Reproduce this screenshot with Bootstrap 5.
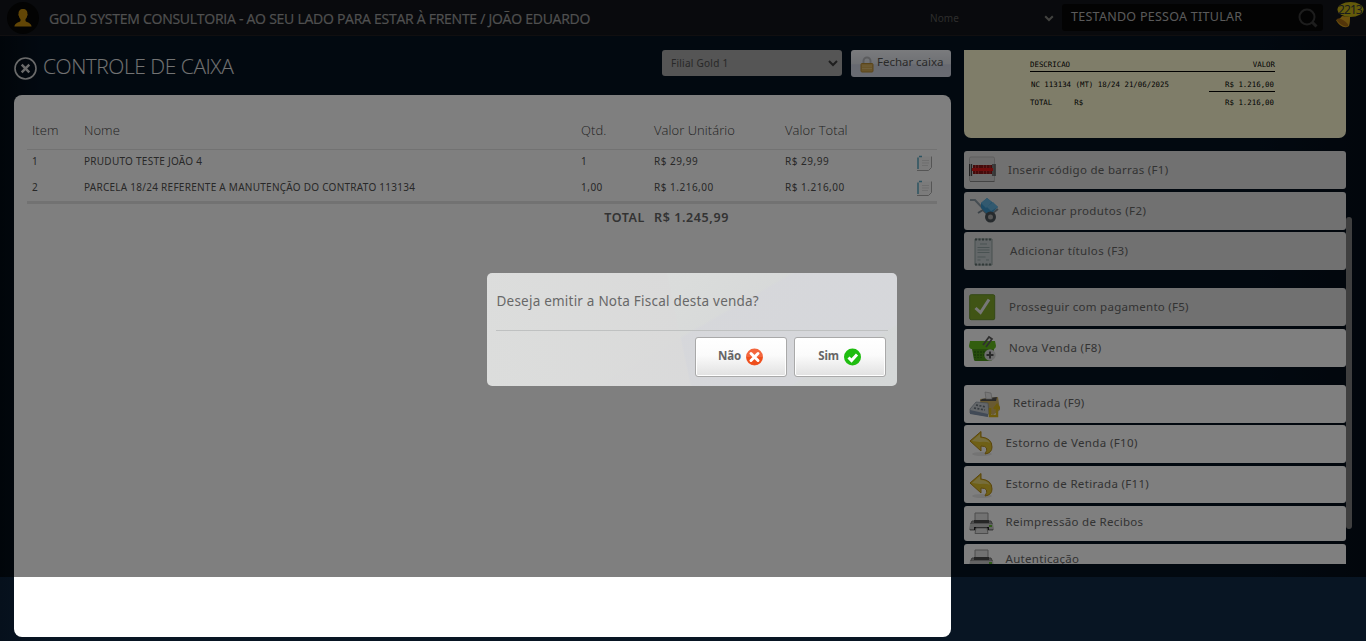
<!DOCTYPE html>
<html lang="pt-BR">
<head>
<meta charset="utf-8">
<title>Controle de Caixa</title>
<meta name="viewport" content="width=device-width, initial-scale=1">
<link rel="stylesheet" href="https://cdn.jsdelivr.net/npm/bootstrap@5.3.0/dist/css/bootstrap.min.css">
<style>
body{height:641px;overflow:hidden;background:linear-gradient(90deg,#030b14 0,#051221 3%,#051221 92%,#040d18 100%);font-family:"Noto Sans","Open Sans",sans-serif;color:#666;font-size:11px;letter-spacing:.3px}
.foot-bg{position:absolute;left:0;right:0;top:577px;height:64px;background:linear-gradient(90deg,#06101c,#081523 4%,#081523)}
.topbar{height:36px;background:#12151a;border-bottom:1px solid #221f20;position:relative}
.avatar{width:32px;height:32px;border-radius:50%;background:#060606;margin-left:7px;margin-top:1px}
.brand-title{font:14px/20px "Open Sans",sans-serif;color:#a0a0a0;margin-left:10px;letter-spacing:-.26px;padding-top:2px;white-space:nowrap;-webkit-text-stroke:.2px #a0a0a0}
.kind{width:124px;margin-left:auto;color:#5b5a58;font-size:10px;letter-spacing:.1px;padding-top:2px}
.search{width:261px;height:27px;background:#070707;border-radius:3px;margin:0 14px 0 8px;padding:0 5px 0 9px;color:#b5b5b5;font-size:12.5px;letter-spacing:.27px}
.work{padding:14px 14px 0;position:relative}
.left-col{width:937px}
.page-title{font:300 21px/30px "Open Sans",sans-serif;color:#e6e6e6;letter-spacing:-.47px;margin:1px 0 0 6px;height:29px}
.branch{width:180px;height:26px;background:#aaa;border-radius:3px;padding:0 4px 0 9px;font-size:10px;color:#505050;letter-spacing:.25px}
.close-till{width:100px;height:27px;border-radius:3px;margin-left:9px;background:linear-gradient(#f4f6fb,#dfe2e9 50%,#ced3e2 55%,#d3d8e5);border:0;padding:0 0 3px 9px;color:#555;font-size:11.5px;letter-spacing:-.03px;white-space:nowrap}
.sheet{height:542px;background:#fff;border-radius:8px;margin-top:15px;padding:18px 14px 0 13px}
.items{table-layout:fixed;width:910px;border-collapse:collapse}
.items th{font:300 13px/20px "Open Sans",sans-serif;height:36px;padding:7px 0 9px 5px;letter-spacing:.05px;color:#444;border-bottom:1px solid #e5e5e5;vertical-align:middle}
.items td{height:26px;padding:0 0 2px 5px;font-size:10px;line-height:15px;color:#505050;letter-spacing:.26px;white-space:nowrap;vertical-align:middle}
.items .second td{height:27px;padding-bottom:1px}
.items td:nth-child(n+3){letter-spacing:.5px}
.items tr td:last-child{padding:1px 0 0 4px}
.items td svg{display:block;margin-top:1px}
.items .second svg{margin-top:-1px}
.items .total td,.items .total td:last-child{border-top:3px solid #e5e5e5;font-weight:600;font-size:12.5px;height:29px;padding:0 0 1px 5px;color:#666;letter-spacing:.6px}
.right-col{width:382px;margin-left:13px;height:514px;overflow:hidden}
.receipt{height:88px;background:#fefbd3;border-radius:0 0 7px 7px;font:7.4px/10px "DejaVu Sans Mono",monospace;letter-spacing:0;color:#000;padding:9px 71px 0 66px;margin-bottom:13.3px}
.receipt .ln{border-bottom:1px solid #000}
.act{height:37.8px;margin-bottom:2.7px;background:#fff;border-radius:3px;color:#666;font-size:11.5px;padding:0 0 1px 5px;letter-spacing:.3px}
.act.off{background:#e3e3e3}
.act svg{flex:none}
.act.end{margin-bottom:18.2px}
.act.low{height:34.5px;margin-bottom:3px;padding-bottom:2px}
.act.low svg{position:relative;top:1px}
.thumb{position:absolute;left:1346px;top:181px;width:6px;height:312px;border-radius:3px;background:#7f7f7f}
.shade{position:absolute;left:0;top:0;width:100%;height:577px;background:rgba(0,0,0,.5);z-index:5}
.ask{position:absolute;z-index:6;left:487px;top:273px;width:410px;height:113px;border-radius:5px;padding:0 9px;background:linear-gradient(78deg,rgba(220,221,220,.9) 0,rgba(218,218,218,.9) 46.8%,transparent 47.2%),linear-gradient(150deg,transparent 0,transparent 50%,rgba(214,215,219,.9) 51%,rgba(214,215,219,.9) 82%,transparent 83%),linear-gradient(135deg,#dcdedd 0,#dadcdb 40%,#d6d8d8 65%,#d4d7d7 100%)}
.ask p{font-size:13.5px;color:#686868;letter-spacing:.22px;height:58px;line-height:57px;margin:0;border-bottom:1px solid #bfc1c1;padding-left:.5px}
.ask .acts{padding:6px 2px 0 0;gap:7px}
.choice{width:92px;height:40px;border:1px solid #a9a9a9;border-radius:3px;background:linear-gradient(#fff,#fbfbfb 45%,#e1e1e1);box-shadow:inset 0 0 0 1px #fff;font-weight:700;font-size:11.5px;color:#666;letter-spacing:-.1px;gap:5px;padding:0 1px 2px 0}
.choice svg{position:relative;top:1px}
.bell{width:29px;height:32px;position:relative;top:-3px;left:-1px;flex:none}
</style>
</head>
<body>
<div class="foot-bg"></div>
<nav class="topbar d-flex align-items-center">
  <div class="avatar d-flex justify-content-center align-items-center"><svg width="18" height="20" viewBox="0 0 18 20"><path fill="#c58d0c" d="M9 1C6 1 4.300 3 4.600 6c-.5.2-.3 1.600.3 2 .2 1.500.9 2.500 1.600 3.200V13C5.500 14.500.8 14.500.4 18.500h17.200C17.200 14.500 12.500 14.500 11.500 13v-1.800c.7-.7 1.400-1.700 1.600-3.200.6-.4.8-1.800.3-2C13.700 3 12 1 9 1z"/></svg></div>
  <div class="brand-title">GOLD SYSTEM CONSULTORIA - AO SEU LADO PARA ESTAR À FRENTE / JOÃO EDUARDO</div>
  <div class="kind d-flex align-items-center justify-content-between"><span>Nome</span><svg width="10" height="7" viewBox="0 0 10 7"><path d="M1.200 1.200 5 5l3.800-3.800" fill="none" stroke="#84847f" stroke-width="2"/></svg></div>
  <div class="search d-flex align-items-center justify-content-between"><span>TESTANDO PESSOA TITULAR</span><svg width="20" height="20" viewBox="0 0 20 20" fill="none" stroke="#3b3b3b" stroke-width="2"><circle cx="9" cy="9" r="7.500"/><path stroke-width="3" d="m14 14 4.500 4.500"/></svg></div>
  <svg class="bell" viewBox="0 0 29 32"><path d="m6 17 8 1c0 3 0 6-1 9-4 3-10 0-13-6 3-1 5-2 6-4z" fill="#d9a31c"/><ellipse cx="6.500" cy="23.500" rx="6.500" ry="2.500" transform="rotate(32 6.500 23.500)" fill="#a66b13"/><ellipse cx="14.500" cy="10.500" rx="13" ry="7.500" fill="#c8b414"/><text x="2" y="15" font-size="12" textLength="25" font-family="Noto Sans" fill="#34383c">2213</text></svg>
</nav>
<main class="work d-flex">
  <section class="left-col">
    <header class="d-flex align-items-start">
      <svg width="23" height="23" viewBox="0 0 23 23" fill="none" stroke="#d5d5d5" style="margin-top:7px"><circle cx="11.500" cy="11.500" r="10.500" stroke-width="1.600"/><path d="m7.700 7.700 7.600 7.600m0-7.600-7.600 7.600" stroke-width="2.400"/></svg>
      <h1 class="page-title pt-0">CONTROLE DE CAIXA</h1>
      <div class="branch d-flex align-items-center justify-content-between ms-auto"><span>Filial Gold 1</span><svg width="10" height="7" viewBox="0 0 10 7"><path d="M1 1 5 5l4-4" fill="none" stroke="#3d3d3d" stroke-width="2"/></svg></div>
      <button class="close-till d-flex align-items-center"><svg width="14" height="17" viewBox="0 0 14 17" class="mt-1" style="margin-right:3px"><path d="M3.500 8V5a3.500 3.500 0 0 1 7 0v3" fill="none" stroke="#b7b9bd" stroke-width="2"/><rect x="1" y="7.500" width="12" height="8.500" rx="1" fill="#d0a855" stroke="#b58a35"/><path d="M2 10h10M2 12.500h10" stroke="#dfbf76"/></svg>Fechar caixa</button>
    </header>
    <div class="sheet">
      <table class="items">
        <colgroup><col style="width:52px"><col style="width:497px"><col style="width:73px"><col style="width:131px"><col style="width:132px"><col style="width:25px"></colgroup>
        <thead><tr><th>Item</th><th>Nome</th><th>Qtd.</th><th>Valor Unitário</th><th>Valor Total</th><th></th></tr></thead>
        <tbody>
          <tr><td>1</td><td>PRUDUTO TESTE JOÃO 4</td><td>1</td><td>R$ 29,99</td><td>R$ 29,99</td><td><svg width="17" height="17" viewBox="0 0 17 17"><path d="M1.500 1.500h14v11l-3 3h-11z" fill="#f6f6f6"/><path d="M1 15.500h11.500l3-3V1.500" fill="none" stroke="#aaa"/><path d="M2 14V2.500M3 1.500h3" stroke="#5aa9c4" stroke-width="1.500"/><path d="M6 5.500h7M6 8h7M6 10.500h6" stroke="#ddd"/></svg></td></tr>
          <tr class="second"><td>2</td><td>PARCELA 18/24 REFERENTE A MANUTENÇÃO DO CONTRATO 113134</td><td>1,00</td><td>R$ 1.216,00</td><td>R$ 1.216,00</td><td><svg width="17" height="17" viewBox="0 0 17 17"><path d="M1.500 1.500h14v11l-3 3h-11z" fill="#f6f6f6"/><path d="M1 15.500h11.500l3-3V1.500" fill="none" stroke="#aaa"/><path d="M2 14V2.500M3 1.500h3" stroke="#5aa9c4" stroke-width="1.500"/><path d="M6 5.500h7M6 8h7M6 10.500h6" stroke="#ddd"/></svg></td></tr>
          <tr class="total"><td colspan="3" class="text-end pe-1">TOTAL</td><td colspan="3">R$ 1.245,99</td></tr>
        </tbody>
      </table>
    </div>
  </section>
  <aside class="right-col">
    <div class="receipt">
      <div class="ln d-flex justify-content-between align-items-end" style="height:13px;padding-bottom:1px"><span>DESCRICAO</span><span>VALOR</span></div>
      <div class="d-flex justify-content-between" style="height:20px;padding-top:8px"><span style="margin-left:1px">NC 113134 (MT) 18/24 21/06/2025</span><span class="ln text-end" style="width:66px;height:12px;padding-right:1px">R$ 1.216,00</span></div>
      <div class="d-flex" style="padding:6px 1px 0 0"><span>TOTAL</span><span style="margin-left:22px">R$</span><span class="ms-auto">R$ 1.216,00</span></div>
    </div>
    <div class="act off d-flex align-items-center"><svg width="27" height="27" viewBox="0 0 27 27"><rect x=".5" y="1" width="25" height="24.500" rx="1.500" fill="#d9d9d9" stroke="#bbb"/><path d="M1 25.500h24.500" stroke="#888"/><path d="M.5 8v12M2.500 8v12M24 8v12M26 8v12" stroke="#444" stroke-width="1.300"/><path fill="#8a1717" d="M4 9h19v9H4z"/><path stroke="#b93a3a" d="M6.500 9v9M9.500 9v9M14.500 9v9M17.500 9v9M21 9v9"/><path stroke="#e01818" stroke-width="3" d="M3 13.500h21"/></svg><span style="margin-left:12px">Inserir código de barras (F1)</span></div>
    <div class="act off d-flex align-items-center"><svg width="31" height="26" viewBox="0 0 31 26"><path d="M1 3h5l14 15" fill="none" stroke="#8b9aa5" stroke-width="2"/><path d="m9 16 5-3 6 6 9-7" fill="none" stroke="#788690" stroke-width="2"/><path d="m12 6 6-5 5 4 6 5-8 8-4-2-5-5z" fill="#3b97cd"/><path d="m12 6 6-5 5 4-6 6zM18 10l6-5 5 5-7 4z" fill="#65b3df"/><circle cx="21.500" cy="20" r="4" fill="#aaa" stroke="#4c555b" stroke-width="3"/></svg><span style="margin-left:12px;letter-spacing:.36px">Adicionar produtos (F2)</span></div>
    <div class="act off end d-flex align-items-center"><svg width="29" height="28" viewBox="0 0 29 28" style="position:relative;top:1px"><path d="M6 1h17v26H6z" fill="#c6ced0" stroke="#8fa09f"/><path d="M6 1.500h17M6 26.500h17" stroke="#627271" stroke-width="2" stroke-dasharray="2 1.500"/><path d="M11 6h7M8.500 9.500h12M8.500 12h12M8.500 14.500h12M8.500 19h8M8.500 22h3M17 22h3" stroke="#93a5a5"/></svg><span style="margin-left:12px;letter-spacing:.36px">Adicionar títulos (F3)</span></div>
    <div class="act off d-flex align-items-center"><svg width="27" height="27" viewBox="0 0 27 27" style="position:relative;top:1px"><rect x=".7" y=".7" width="25" height="25" rx="1.500" fill="#81a92a" stroke="#68902a"/><path d="m6.500 14 5 4.500 8.500-13" fill="none" stroke="#eee" stroke-width="3"/></svg><span style="margin-left:13px;letter-spacing:.27px">Prosseguir com pagamento (F5)</span></div>
    <div class="act end d-flex align-items-center"><svg width="27" height="27" viewBox="0 0 27 27" style="position:relative;top:1px"><path d="m3 14 2 11q.3 1 1.500 1H21q1.500 0 2-1l2-11z" fill="#4c9818"/><path d="M1 6h25l1 5q0 2-2 3H2q-2-1-2-3z" fill="#64bd1d"/><path d="M6 16v7M9 16v7M12 16v7M15 16v5" stroke="#2b6310" stroke-dasharray="2 1"/><path d="m14 10 6-8 3 2-6 8" fill="none" stroke="#5e5e5e" stroke-width="1.700"/><circle cx="21" cy="20" r="5.700" fill="#ddd"/><path d="M21 16.500v7M17.500 20h7" stroke="#555" stroke-width="2"/></svg><span style="margin-left:13px;letter-spacing:.37px">Nova Venda (F8)</span></div>
    <div class="act d-flex align-items-center"><svg width="31" height="27" viewBox="0 0 31 27" style="position:relative;top:1px"><path d="m11 8 18-2 2 13-7 5-12-6z" fill="#d3b465"/><path d="m13 8 15-2-1 4H11z" fill="#555"/><path d="m16 1 6 1 1 6h-6z" fill="#eee" stroke="#aaa" stroke-width=".6"/><path d="m1 18 6-7 12 1 1 10-2 3-17-3z" fill="#c8ced4" stroke="#8894a0" stroke-width=".7"/><path d="m1 19 18 4v3L1 23z" fill="#8294ac"/><path d="m7 14 10 2M5 17l11 2" stroke="#69747d" stroke-width="1.600" stroke-dasharray="2 1.500"/><path d="M21 17v8h7v-9m-3 2 3-4 3 4" fill="none" stroke="#d9b717" stroke-width="2.500"/></svg><span style="margin-left:13px">Retirada (F9)</span></div>
    <div class="act d-flex align-items-center"><svg width="25" height="27" viewBox="0 0 25 27"><ellipse cx="13" cy="24" rx="10" ry="2" fill="#e9e9e9"/><path d="M1 11 12 1.500V7q11 1 11 10 0 6-7 7 5-8-4-8v5z" fill="#dfc02c" stroke="#b58b16"/><path d="m3 11 8-7v4q7 0 10 5-4-2-10-1z" fill="#eddb78"/></svg><span style="margin:-1px 0 0 11.500px;letter-spacing:.37px">Estorno de Venda (F10)</span></div>
    <div class="act d-flex align-items-center"><svg width="25" height="27" viewBox="0 0 25 27" style="position:relative;top:1px"><ellipse cx="13" cy="24" rx="10" ry="2" fill="#e9e9e9"/><path d="M1 11 12 1.500V7q11 1 11 10 0 6-7 7 5-8-4-8v5z" fill="#dfc02c" stroke="#b58b16"/><path d="m3 11 8-7v4q7 0 10 5-4-2-10-1z" fill="#eddb78"/></svg><span style="margin-left:11.500px;letter-spacing:.32px">Estorno de Retirada (F11)</span></div>
    <div class="act low d-flex align-items-center"><svg width="25" height="23" viewBox="0 0 25 23"><path d="M6 1h13v10H6z" fill="#e4e4e4" stroke="#999"/><path d="M3 9h19q2 2 2 9H1q0-7 2-9z" fill="#9a9a9a" stroke="#777"/><path d="M5 8h15v3H5z" fill="#4c4c4c"/><path d="M1 12h23v5H1z" fill="#c9c9c9"/><path d="M5 15h15v3H5z" fill="#222"/><path d="M7 16h11l1 5.500H6z" fill="#e2e2e2" stroke="#999"/><path d="M20 13h3v2h-3z" fill="#61bb30"/></svg><span style="margin:-1px 0 0 11.500px;letter-spacing:.31px">Reimpressão de Recibos</span></div>
    <div class="act low d-flex align-items-center"><svg width="25" height="23" viewBox="0 0 25 23"><path d="M6 1h13v10H6z" fill="#e4e4e4" stroke="#999"/><path d="M3 9h19q2 2 2 9H1q0-7 2-9z" fill="#9a9a9a" stroke="#777"/><path d="M5 8h15v3H5z" fill="#4c4c4c"/><path d="M1 12h23v5H1z" fill="#c9c9c9"/><path d="M5 15h15v3H5z" fill="#222"/><path d="M7 16h11l1 5.500H6z" fill="#e2e2e2" stroke="#999"/><path d="M20 13h3v2h-3z" fill="#61bb30"/></svg><span style="margin:-2px 0 0 11.500px">Autenticação</span></div>
  </aside>
  <div class="thumb"></div>
</main>
<div class="shade"></div>
<div class="ask" role="dialog">
  <p>Deseja emitir a Nota Fiscal desta venda?</p>
  <div class="acts d-flex justify-content-end">
    <button class="choice d-flex align-items-center justify-content-center">Não <svg width="17" height="18" viewBox="0 0 17 18"><circle cx="8.500" cy="9" r="8.500" fill="#f3663d"/><path d="M.5 9a8 8 0 0 0 16 0z" fill="#ee4f1c"/><path d="m5 5.500 7 7m0-7-7 7" stroke="#fff" stroke-width="3" stroke-linecap="round"/></svg></button>
    <button class="choice d-flex align-items-center justify-content-center">Sim <svg width="17" height="18" viewBox="0 0 17 18"><circle cx="8.500" cy="9" r="8.500" fill="#1fbd10"/><path d="m4.500 9.500 3 3 5.500-6" fill="none" stroke="#fff" stroke-width="3"/></svg></button>
  </div>
</div>
<script src="https://cdn.jsdelivr.net/npm/bootstrap@5.3.0/dist/js/bootstrap.bundle.min.js"></script>
</body>
</html>
